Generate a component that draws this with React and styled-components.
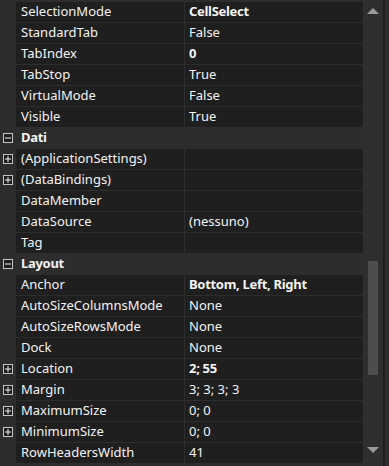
import React from 'react';
import styled, { createGlobalStyle } from 'styled-components';

const Global = createGlobalStyle`
  html, body { margin: 0; padding: 0; background: #2b2b2b; }
  body { font-family: "Noto Sans", "Open Sans", sans-serif; }
`;

const Panel = styled.div`
  width: 389px;
  height: 466px;
  display: flex;
  background: #2b2b2b;
  overflow: hidden;
`;

const List = styled.div`
  width: 363px;
  flex: none;
  display: flex;
  flex-direction: column;
  gap: 1px;
  padding-top: 2px;
  background: #2d2d2d;
`;

const Row = styled.div`
  display: flex;
  height: 20px;
  flex: none;
`;

const Gutter = styled.div`
  width: 16px;
  flex: none;
  display: flex;
  align-items: center;
  padding-left: 3px;
  box-sizing: border-box;
`;

const Cells = styled.div`
  flex: 1;
  display: grid;
  grid-template-columns: 168px 178px;
  column-gap: 1px;
`;

const Cell = styled.div`
  background: #1f1f1f;
  color: #f3f3f3;
  font-size: 13px;
  font-weight: ${p => (p.$bold ? 700 : 400)};
  letter-spacing: ${p => (p.$bold ? '-0.3px' : '0')};
  line-height: 18px;
  padding-left: ${p => (p.$value ? 4 : 5)}px;
  white-space: nowrap;
  overflow: hidden;
`;

const CategoryLabel = styled.div`
  flex: 1;
  color: #f3f3f3;
  font-size: 13px;
  font-weight: 700;
  letter-spacing: -0.3px;
  line-height: 18px;
  padding-left: 5px;
`;

const ScrollBar = styled.div`
  width: 20px;
  flex: none;
  background: #2e2e2e;
  display: flex;
  flex-direction: column;
  align-items: center;
  padding: 8px 0 13px;
  box-sizing: border-box;
`;

const Arrow = styled.svg`
  width: 12px;
  height: 6px;
  flex: none;
  display: block;
`;

const Thumb = styled.div`
  width: 10px;
  height: 114px;
  margin-top: 247px;
  background: #4d4d4d;
  flex: none;
`;

const Spacer = styled.div`
  flex: 1;
`;

const Edge = styled.div`
  width: 2px;
  flex: none;
  background: #1c1c1c;
`;

const Rim = styled.div`
  flex: 1;
  background: #2e2e2e;
`;

const Toggle = ({ open }) => (
  <svg width="10" height="10" viewBox="0 0 10 10" style={{ display: 'block' }}>
    <rect x="0.5" y="0.5" width="9" height="9" fill="#1f1f1f" stroke="#c4c4c4" />
    <line x1="2" y1="5" x2="8" y2="5" stroke="#f1f1f1" strokeWidth="1" />
    {!open && <line x1="5" y1="2" x2="5" y2="8" stroke="#f1f1f1" strokeWidth="1" />}
  </svg>
);

const rows = [
  { name: 'SelectionMode', value: 'CellSelect', bold: true },
  { name: 'StandardTab', value: 'False' },
  { name: 'TabIndex', value: '0', bold: true },
  { name: 'TabStop', value: 'True' },
  { name: 'VirtualMode', value: 'False' },
  { name: 'Visible', value: 'True' },
  { category: 'Dati' },
  { name: '(ApplicationSettings)', expand: true },
  { name: '(DataBindings)', expand: true },
  { name: 'DataMember' },
  { name: 'DataSource', value: '(nessuno)' },
  { name: 'Tag' },
  { category: 'Layout' },
  { name: 'Anchor', value: 'Bottom, Left, Right', bold: true },
  { name: 'AutoSizeColumnsMode', value: 'None' },
  { name: 'AutoSizeRowsMode', value: 'None' },
  { name: 'Dock', value: 'None' },
  { name: 'Location', value: '2; 55', bold: true, expand: true },
  { name: 'Margin', value: '3; 3; 3; 3', expand: true },
  { name: 'MaximumSize', value: '0; 0', expand: true },
  { name: 'MinimumSize', value: '0; 0', expand: true },
  { name: 'RowHeadersWidth', value: '41' },
];

export default function App() {
  return (
    <>
      <Global />
      <Panel>
        <List>
          {rows.map((r, i) =>
            r.category ? (
              <Row key={i}>
                <Gutter><Toggle open /></Gutter>
                <CategoryLabel>{r.category}</CategoryLabel>
              </Row>
            ) : (
              <Row key={i}>
                <Gutter>{r.expand && <Toggle />}</Gutter>
                <Cells>
                  <Cell>{r.name}</Cell>
                  <Cell $value $bold={r.bold}>{r.value || ''}</Cell>
                </Cells>
              </Row>
            )
          )}
        </List>
        <ScrollBar>
          <Arrow viewBox="0 0 12 6"><polygon points="6,0 12,6 0,6" fill="#9a9a9a" /></Arrow>
          <Thumb />
          <Spacer />
          <Arrow viewBox="0 0 12 6"><polygon points="0,0 12,0 6,6" fill="#9a9a9a" /></Arrow>
        </ScrollBar>
        <Edge />
        <Rim />
      </Panel>
    </>
  );
}
